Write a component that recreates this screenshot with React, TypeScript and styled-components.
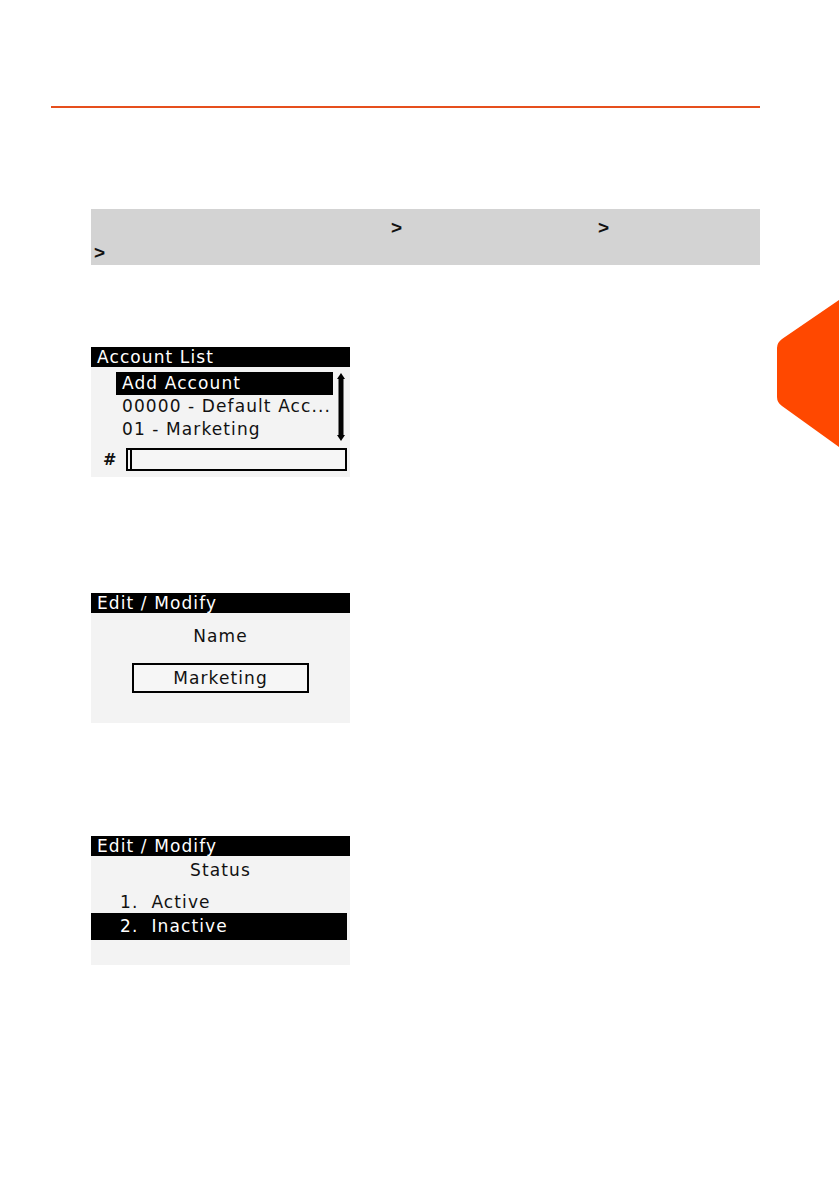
import React from "react";
import styled, { createGlobalStyle } from "styled-components";

const GlobalStyle = createGlobalStyle`
  html, body {
    margin: 0;
    padding: 0;
    background: #ffffff;
  }
  body {
    font-family: "Liberation Sans", Arial, sans-serif;
    overflow: hidden;
  }
`;

const Page = styled.div`
  position: relative;
  width: 839px;
  height: 1191px;
  display: flex;
  flex-direction: column;
`;

const Rule = styled.div`
  margin: 106px 0 0 51px;
  width: 709px;
  height: 2px;
  background: #e64f1d;
`;

const NavPath = styled.div`
  margin: 101px 0 0 91px;
  width: 669px;
  height: 56px;
  background: #d3d3d3;
  font-size: 19px;
  font-weight: bold;
  color: #111;
  display: flex;
  flex-direction: column;
  padding-top: 6px;
  box-sizing: border-box;
`;

const NavLine = styled.div`
  display: flex;
  height: 25px;
  line-height: 25px;
`;

const Sep = styled.span<{ $gap: number }>`
  margin-left: ${(p) => p.$gap}px;
`;

const ChapterTab = styled.svg`
  position: absolute;
  left: 770px;
  top: 295px;
`;

const Screen = styled.div<{ $top: number; $height: number }>`
  margin: ${(p) => p.$top}px 0 0 91px;
  width: 259px;
  height: ${(p) => p.$height}px;
  background: #f3f3f3;
  display: flex;
  flex-direction: column;
  font-family: "DejaVu Sans", Verdana, sans-serif;
  font-size: 17px;
  letter-spacing: 1.1px;
  color: #111;
`;

const TitleBar = styled.div`
  height: 20px;
  line-height: 20px;
  background: #000;
  color: #fff;
  padding-left: 6px;
  white-space: nowrap;
`;

const ListArea = styled.div`
  display: flex;
  padding: 5px 0 0 25px;
`;

const Rows = styled.div`
  width: 217px;
  display: flex;
  flex-direction: column;
`;

const Row = styled.div<{ $selected?: boolean }>`
  height: 23px;
  line-height: 23px;
  padding-left: 6px;
  white-space: nowrap;
  overflow: hidden;
  background: ${(p) => (p.$selected ? "#000" : "transparent")};
  color: ${(p) => (p.$selected ? "#fff" : "#111")};
`;

const ScrollBar = styled.svg`
  margin: 1px 0 0 3px;
`;

const EntryRow = styled.div`
  display: flex;
  align-items: center;
  margin-top: 7px;
  padding-left: 12px;
`;

const Hash = styled.span`
  width: 23px;
  font-size: 16px;
  font-weight: bold;
`;

const EntryBox = styled.div`
  width: 221px;
  height: 23px;
  border: 2px solid #000;
  box-sizing: border-box;
  background: #f6f6f6;
  display: flex;
  padding-left: 2px;
`;

const Cursor = styled.div`
  width: 2px;
  height: 100%;
  background: #000;
`;

const Label = styled.div<{ $mt: number }>`
  margin-top: ${(p) => p.$mt}px;
  height: 22px;
  line-height: 22px;
  text-align: center;
`;

const ValueBox = styled.div`
  margin: 16px auto 0;
  width: 177px;
  height: 30px;
  border: 2px solid #000;
  box-sizing: border-box;
  line-height: 26px;
  text-align: center;
  background: #f6f6f6;
`;

const Option = styled.div<{ $selected?: boolean; $mt?: number }>`
  margin: ${(p) => p.$mt ?? 0}px 3px 0 0;
  height: ${(p) => (p.$selected ? 27 : 22)}px;
  line-height: ${(p) => (p.$selected ? 27 : 22)}px;
  padding-left: 29px;
  white-space: nowrap;
  background: ${(p) => (p.$selected ? "#000" : "transparent")};
  color: ${(p) => (p.$selected ? "#fff" : "#111")};
`;

function App() {
  return (
    <Page>
      <GlobalStyle />
      <Rule />
      <NavPath>
        <NavLine>
          <Sep $gap={300}>&gt;</Sep>
          <Sep $gap={196}>&gt;</Sep>
        </NavLine>
        <NavLine>
          <Sep $gap={3}>&gt;</Sep>
        </NavLine>
      </NavPath>

      <ChapterTab width="69" height="160" viewBox="0 0 69 160">
        <path
          d="M69 5 L12 44 Q7 47.5 7 53 L7 102 Q7 107.5 12 111 L69 152 Z"
          fill="#ff4800"
        />
      </ChapterTab>

      <Screen $top={82} $height={130}>
        <TitleBar>Account List</TitleBar>
        <ListArea>
          <Rows>
            <Row $selected>Add Account</Row>
            <Row>00000 - Default Acc...</Row>
            <Row>01 - Marketing</Row>
          </Rows>
          <ScrollBar width="10" height="68" viewBox="0 0 10 68">
            <path d="M5 0 L9 6 L1 6 Z" fill="#000" />
            <rect x="2.5" y="5" width="5" height="58" rx="1" fill="#000" />
            <path d="M5 68 L9 62 L1 62 Z" fill="#000" />
          </ScrollBar>
        </ListArea>
        <EntryRow>
          <Hash>#</Hash>
          <EntryBox>
            <Cursor />
          </EntryBox>
        </EntryRow>
      </Screen>

      <Screen $top={116} $height={130}>
        <TitleBar>Edit / Modify</TitleBar>
        <Label $mt={12}>Name</Label>
        <ValueBox>Marketing</ValueBox>
      </Screen>

      <Screen $top={113} $height={129}>
        <TitleBar>Edit / Modify</TitleBar>
        <Label $mt={3}>Status</Label>
        <Option $mt={10}>1.&nbsp; Active</Option>
        <Option $selected>2.&nbsp; Inactive</Option>
      </Screen>
    </Page>
  );
}

export default App;
